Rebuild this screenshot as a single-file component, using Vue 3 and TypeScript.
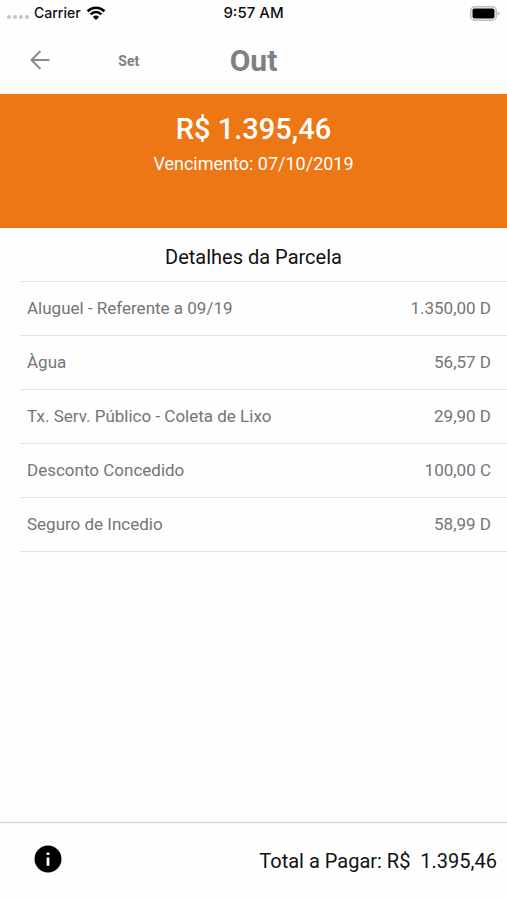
<script setup lang="ts">
import { ref } from 'vue'

interface Entry {
  label: string
  amount: string
}

const previousMonth = ref('Set')
const currentMonth = ref('Out')
const total = '1.395,46'
const dueDate = '07/10/2019'

const entries: Entry[] = [
  { label: 'Aluguel - Referente a 09/19', amount: '1.350,00 D' },
  { label: 'Àgua', amount: '56,57 D' },
  { label: 'Tx. Serv. Público - Coleta de Lixo', amount: '29,90 D' },
  { label: 'Desconto Concedido', amount: '100,00 C' },
  { label: 'Seguro de Incedio', amount: '58,99 D' },
]
</script>

<template>
  <div class="screen">
    <div class="status">
      <div class="carrier">
        <span class="signal"><i v-for="n in 4" :key="n" /></span>
        <span>Carrier</span>
        <svg class="wifi" width="20" height="14" viewBox="0 0 20 14" aria-hidden="true">
          <path d="M1.6 5.2a12 12 0 0 1 16.8 0" />
          <path d="M4.6 8.3a7.6 7.6 0 0 1 10.8 0" />
          <path class="solid" d="M10 14l-3.1-3.1a4.4 4.4 0 0 1 6.2 0z" />
        </svg>
      </div>
      <span class="clock">9:57 AM</span>
      <svg class="battery" width="30" height="15" viewBox="0 0 30 15" aria-hidden="true">
        <rect x="0.75" y="0.75" width="25.5" height="13.5" rx="4" fill="#fff" stroke="#bdbdbd" stroke-width="1.5" />
        <rect x="2.5" y="2.5" width="22" height="10" rx="2" fill="#000" />
        <path d="M27.6 5.4q1.8.7 1.8 2.1t-1.8 2.1z" fill="#aaa" />
      </svg>
    </div>

    <header class="months">
      <button class="back" type="button" aria-label="Voltar">
        <svg width="20" height="20" viewBox="0 0 20 20" aria-hidden="true">
          <path d="M19.5 10H1.5M10.5 1L1.5 10l9 9" />
        </svg>
      </button>
      <button class="previous" type="button">{{ previousMonth }}</button>
      <h1>{{ currentMonth }}</h1>
    </header>

    <section class="summary">
      <strong>R$ {{ total }}</strong>
      <span>Vencimento: {{ dueDate }}</span>
    </section>

    <main class="details">
      <h2 id="details-title">Detalhes da Parcela</h2>
      <table aria-labelledby="details-title">
        <tbody>
          <tr v-for="entry in entries" :key="entry.label">
            <th scope="row">{{ entry.label }}</th>
            <td>{{ entry.amount }}</td>
          </tr>
        </tbody>
      </table>
    </main>

    <footer class="total">
      <button class="info" type="button" aria-label="Informações">
        <svg width="28" height="28" viewBox="0 0 28 28" aria-hidden="true">
          <circle cx="14" cy="14" r="13.5" fill="#000" />
          <path d="M12.6 7.4h2.8v2.7h-2.8zM12.6 12.6h2.8v8.2h-2.8z" fill="#fff" />
        </svg>
      </button>
      <span class="sum">Total a Pagar: R$&nbsp; {{ total }}</span>
    </footer>
  </div>
</template>

<style>
body {
  margin: 0;
  background: #fff;
}
</style>

<style scoped>
.screen {
  display: flex;
  flex-direction: column;
  min-height: 100vh;
  font-family: Roboto, sans-serif;
  color: #111;
  background: #fefefe;
}

button {
  padding: 0;
  border: 0;
  background: none;
  font-family: inherit;
  color: inherit;
  cursor: pointer;
}

svg {
  display: block;
}

.status {
  display: grid;
  grid-template-columns: 1fr auto 1fr;
  align-items: center;
  height: 26px;
  padding: 0 7px;
  font: 500 14px/26px Inter, sans-serif;
}

.clock {
  font-size: 15px;
}

.carrier {
  display: flex;
  align-items: center;
  gap: 5px;
}

.signal {
  display: flex;
  gap: 2px;
  padding-top: 8px;
}

.signal i {
  width: 4px;
  height: 4px;
  border-radius: 50%;
  background: #c4c4c4;
}

.wifi path {
  fill: none;
  stroke: #000;
  stroke-width: 2.6;
}

.wifi .solid {
  fill: #000;
  stroke: none;
}

.battery {
  justify-self: end;
}

.months {
  display: grid;
  grid-template-columns: 1fr 2fr 2fr 2fr 1fr;
  align-items: center;
  box-sizing: border-box;
  height: 68px;
  padding-top: 2px;
  color: #808080;
}

.back {
  justify-self: end;
  padding: 0 0 2px;
  margin-right: 13px;
}

.back path {
  fill: none;
  stroke: #8c8c8c;
  stroke-width: 2;
}

.previous {
  padding-left: 4px;
  font-size: 14px;
  font-weight: 700;
}

h1 {
  margin: 0;
  font-size: 30px;
  line-height: 36px;
  font-weight: 700;
  text-align: center;
}

.summary {
  display: flex;
  flex-direction: column;
  align-items: center;
  box-sizing: border-box;
  height: 134px;
  padding-top: 16px;
  color: #fff;
  background: #ed7615;
}

.summary strong {
  font-size: 29px;
  line-height: 38px;
  font-weight: 500;
}

.summary span {
  font-size: 18px;
  line-height: 32px;
}

.details {
  flex: 1;
  padding-left: 20px;
}

h2 {
  margin: 0 20px 0 0;
  padding-top: 6px;
  font-size: 20px;
  line-height: 47px;
  font-weight: 400;
  text-align: center;
}

table {
  width: 100%;
  border-spacing: 0;
  border-top: 1px solid #e2e2e2;
  font-size: 17px;
  color: #757575;
}

th,
td {
  box-sizing: border-box;
  height: 54px;
  padding: 0 0 1px;
  border-bottom: 1px solid #e2e2e2;
  font-weight: 400;
}

th {
  padding-left: 7px;
  text-align: left;
}

td {
  padding-right: 16px;
  text-align: right;
}

.total {
  display: flex;
  align-items: center;
  justify-content: space-between;
  box-sizing: border-box;
  height: 78px;
  padding: 0 10px 2px 34px;
  border-top: 1px solid #cfcfcf;
  font-size: 20px;
}

.info {
  padding-bottom: 4px;
}
</style>
